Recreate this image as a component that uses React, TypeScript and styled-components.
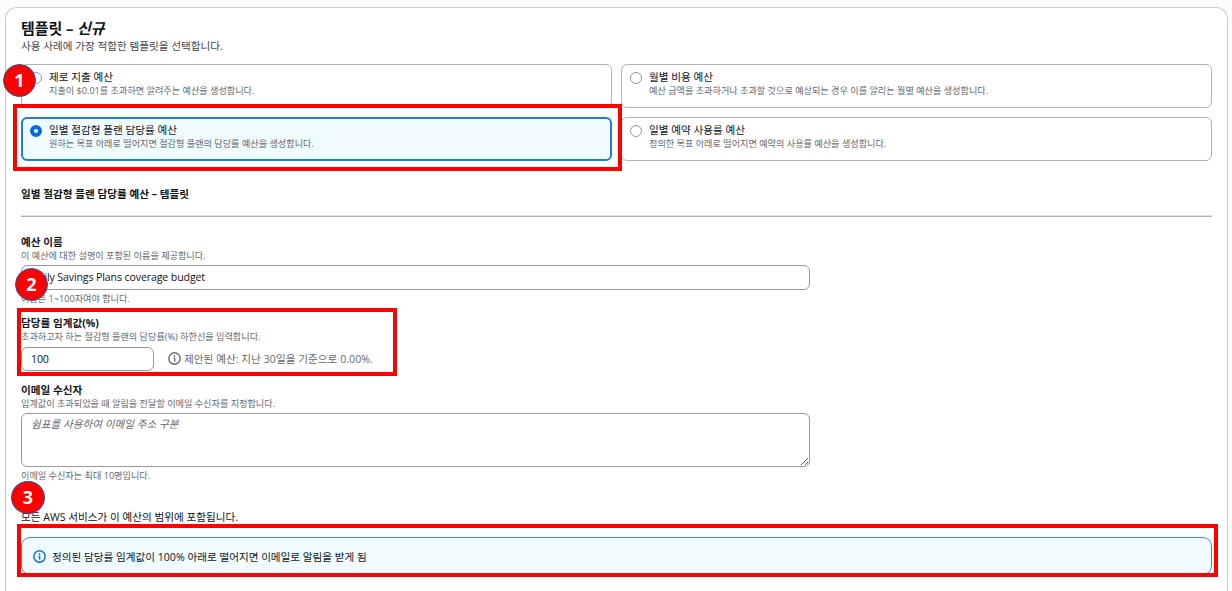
import React, { useState } from "react";
import styled, { createGlobalStyle } from "styled-components";

interface Template {
  id: string;
  title: string;
  description: string;
}

const templates: Template[] = [
  {
    id: "zero",
    title: "제로 지출 예산",
    description: "지출이 $0.01를 초과하면 알려주는 예산을 생성합니다.",
  },
  {
    id: "monthly",
    title: "월별 비용 예산",
    description:
      "예산 금액을 초과하거나 초과할 것으로 예상되는 경우 이를 알리는 월별 예산을 생성합니다.",
  },
  {
    id: "savings",
    title: "일별 절감형 플랜 담당률 예산",
    description:
      "원하는 목표 아래로 떨어지면 절감형 플랜의 담당률 예산을 생성합니다.",
  },
  {
    id: "reservation",
    title: "일별 예약 사용률 예산",
    description: "정의한 목표 아래로 떨어지면 예약의 사용률 예산을 생성합니다.",
  },
];

const InfoIcon = ({ size }: { size: number }) => (
  <svg width={size} height={size} viewBox="0 0 16 16" fill="none">
    <circle cx="8" cy="8" r="7" stroke="currentColor" strokeWidth="1.7" />
    <path d="M8 4v2" stroke="currentColor" strokeWidth="1.8" />
    <path
      d="M6.6 7.8H8.2V12"
      stroke="currentColor"
      strokeWidth="1.6"
    />
  </svg>
);

const App = () => {
  const [selected, setSelected] = useState("savings");
  const [name, setName] = useState("Daily Savings Plans coverage budget");
  const [threshold, setThreshold] = useState("100");

  return (
    <>
      <GlobalStyle />
      <Panel>
        <Title>
          템플릿 – <em>신규</em>
        </Title>
        <Subtitle>사용 사례에 가장 적합한 템플릿을 선택합니다.</Subtitle>

        <TileGrid>
          {templates.map(({ id, title, description }) => (
            <Tile
              key={id}
              $active={id === selected}
              onClick={() => setSelected(id)}
            >
              <Radio $active={id === selected} />
              <div>
                <TileTitle>{title}</TileTitle>
                <Description>{description}</Description>
              </div>
            </Tile>
          ))}
        </TileGrid>

        <SectionTitle>일별 절감형 플랜 담당률 예산 – 템플릿</SectionTitle>
        <Divider />

        <Field>
          <Label>예산 이름</Label>
          <Description>이 예산에 대한 설명이 포함된 이름을 제공합니다.</Description>
          <Input
            $width={789}
            value={name}
            onChange={(e) => setName(e.target.value)}
          />
          <Constraint>이름은 1~100자여야 합니다.</Constraint>
        </Field>

        <Field>
          <Label>담당률 임계값(%)</Label>
          <Description>
            초과하고자 하는 절감형 플랜의 담당률(%) 하한선을 입력합니다.
          </Description>
          <InputRow>
            <Input
              $width={133}
              value={threshold}
              onChange={(e) => setThreshold(e.target.value)}
            />
            <Suggestion>
              <InfoIcon size={13} />
              제안된 예산: 지난 30일을 기준으로 0.00%.
            </Suggestion>
          </InputRow>
        </Field>

        <Field>
          <Label>이메일 수신자</Label>
          <Description>
            임계값이 초과되었을 때 알림을 전달할 이메일 수신자를 지정합니다.
          </Description>
          <TextArea placeholder="쉼표를 사용하여 이메일 주소 구분" />
          <Constraint>이메일 수신자는 최대 10명입니다.</Constraint>
        </Field>

        <Scope>모든 AWS 서비스가 이 예산의 범위에 포함됩니다.</Scope>
        <Alert>
          <InfoIcon size={13} />
          <span>
            정의된 담당률 임계값이 100% 아래로 떨어지면 이메일로 알림을 받게 됨
          </span>
        </Alert>
      </Panel>

      {/* Step markers */}
      <Highlight $x={13} $y={104} $w={609} $h={67} />
      <Highlight $x={17} $y={308} $w={380} $h={68} />
      <Highlight $x={17} $y={524} $w={1201} $h={53} />
      <Step $x={3} $y={64}>1</Step>
      <Step $x={15} $y={268}>2</Step>
      <Step $x={11} $y={481} $w={34}>3</Step>
    </>
  );
};

export default App;

const GlobalStyle = createGlobalStyle`
  * {
    box-sizing: border-box;
  }

  body {
    margin: 0;
    background: #fcfcfc;
    color: #0f141a;
    font-family: "Open Sans", "Noto Sans CJK KR", sans-serif;
    font-size: 10.6px;
  }

  #root {
    display: flow-root;
  }
`;

const Panel = styled.main`
  width: 1223px;
  height: 584px;
  margin: 7px 0 0 5px;
  padding: 10px 15px 0;
  border: 1px solid #c9cbd1;
  border-bottom: 0;
  border-radius: 12px 12px 0 0;
  background: #fff;
  white-space: nowrap;
`;

const Title = styled.h2`
  margin: 0;
  font-size: 15px;
  line-height: 20px;
  font-weight: 700;
  letter-spacing: -0.1px;
`;

const Subtitle = styled.p`
  margin: 0;
  line-height: 17px;
  color: #424650;
`;

const TileGrid = styled.div`
  display: grid;
  grid-template-columns: 1fr 1fr;
  gap: 9px;
  margin-top: 9px;
`;

const Tile = styled.div<{ $active: boolean }>`
  display: flex;
  gap: 7px;
  height: 44px;
  padding: 6px 8px;
  border: 1px solid #b1b3b9;
  border-radius: 6px;
  cursor: pointer;
  ${({ $active }) =>
    $active &&
    `
    padding: 5px 7px;
    border: 2px solid #1f7be2;
    background: #f0fbff;
  `}
`;

const Radio = styled.span<{ $active: boolean }>`
  flex: none;
  width: 12px;
  height: 12px;
  margin-top: 1px;
  border: ${({ $active }) => ($active ? "4px solid #006ce0" : "1px solid #98989f")};
  border-radius: 50%;
  background: #fff;
`;

const TileTitle = styled.div`
  line-height: 13px;
`;

const Description = styled.div`
  font-size: 9.13px;
  line-height: 13.5px;
  color: #656871;
`;

const SectionTitle = styled.h3`
  margin: 25px 0 13px;
  font-size: 10.6px;
  line-height: 16px;
  font-weight: 700;
`;

const Divider = styled.div`
  height: 2px;
  border-top: 1px solid #dedee0;
  border-bottom: 1px solid #b4b4b8;
  margin-bottom: 17.5px;
`;

const Field = styled.div`
  margin-bottom: 11.5px;
`;

const Label = styled.div`
  line-height: 14px;
  font-weight: 700;

  & + ${Description} {
    line-height: 14px;
  }
`;

const Input = styled.input<{ $width: number }>`
  display: block;
  width: ${({ $width }) => $width}px;
  height: 24.5px;
  margin-top: 2.5px;
  padding: 0 9px;
  border: 1px solid #98989f;
  border-radius: 6px;
  background: #fff;
  color: #0f141a;
  font: inherit;
  font-weight: 500;
  letter-spacing: -0.12px;
`;

const InputRow = styled.div`
  display: flex;
  align-items: center;
  gap: 14px;
`;

const Suggestion = styled.div`
  display: flex;
  align-items: center;
  gap: 3px;
  margin-top: 2.5px;
  color: #656871;
  letter-spacing: 0.04px;
`;

const Constraint = styled(Description)`
  margin-top: 2px;
  line-height: 13px;
`;

const TextArea = styled.textarea`
  display: block;
  width: 789px;
  height: 53.5px;
  margin-top: 2.5px;
  padding: 2px 9px;
  border: 1px solid #98989f;
  border-radius: 6px;
  font: inherit;
  line-height: 16px;

  &::placeholder {
    color: #656871;
    font-style: italic;
  }
`;

const Scope = styled.p`
  margin: 27.5px 0 12px;
  line-height: 16px;
`;

const Alert = styled.div`
  display: flex;
  align-items: center;
  gap: 6px;
  height: 38px;
  padding: 0 11px;
  border: 1px solid #3b8be3;
  border-radius: 9px;
  background: #f0fbff;

  svg {
    color: #006ce0;
  }
`;

const Highlight = styled.div<{ $x: number; $y: number; $w: number; $h: number }>`
  position: absolute;
  left: ${({ $x }) => $x}px;
  top: ${({ $y }) => $y}px;
  width: ${({ $w }) => $w}px;
  height: ${({ $h }) => $h}px;
  border: 4px solid #f00;
  pointer-events: none;
`;

const Step = styled.div<{ $x: number; $y: number; $w?: number }>`
  position: absolute;
  left: ${({ $x }) => $x}px;
  top: ${({ $y }) => $y}px;
  display: flex;
  align-items: center;
  justify-content: center;
  width: ${({ $w = 33 }) => $w}px;
  height: 33px;
  padding-bottom: 2px;
  border: 1px solid #2f528f;
  border-radius: 50%;
  background: #f00;
  color: #fff;
  font-size: 18px;
  font-weight: 700;
`;
